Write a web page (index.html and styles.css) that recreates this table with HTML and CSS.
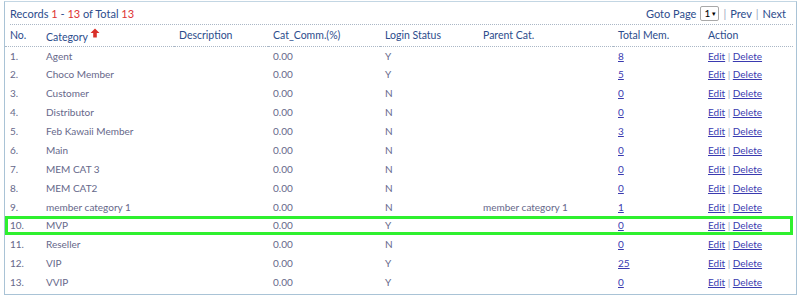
FILE: index.html
```html
<!DOCTYPE html>
<html>
<head>
<meta charset="utf-8">
<link rel="stylesheet" href="styles.css">
</head>
<body>
<div class="panel">
  <div class="topbar">
    <div class="records">Records <span class="num">1</span> - <span class="num">13</span> of Total <span class="num">13</span></div>
    <div class="pager">Goto Page <span class="sel">1 <span class="caret">&#9662;</span></span> <span class="sep">|</span> Prev <span class="sep">|</span> Next</div>
  </div>
  <table class="grid">
    <thead>
      <tr>
        <th class="c-no">No.</th>
        <th class="c-cat">Category<svg class="arrow" width="10" height="10" viewBox="0 0 10 10"><path d="M5 0.5 L9.5 5 L6.8 5 L6.8 9.5 L3.2 9.5 L3.2 5 L0.5 5 Z" fill="#d9302a"/></svg></th>
        <th class="c-desc">Description</th>
        <th class="c-comm">Cat_Comm.(%)</th>
        <th class="c-login">Login Status</th>
        <th class="c-parent">Parent Cat.</th>
        <th class="c-total">Total Mem.</th>
        <th class="c-act">Action</th>
      </tr>
    </thead>
    <tbody>
      <tr><td>1.</td><td>Agent</td><td></td><td>0.00</td><td>Y</td><td></td><td><a>8</a></td><td><a>Edit</a> <span class="sep">|</span> <a>Delete</a></td></tr>
      <tr><td>2.</td><td>Choco Member</td><td></td><td>0.00</td><td>Y</td><td></td><td><a>5</a></td><td><a>Edit</a> <span class="sep">|</span> <a>Delete</a></td></tr>
      <tr><td>3.</td><td>Customer</td><td></td><td>0.00</td><td>N</td><td></td><td><a>0</a></td><td><a>Edit</a> <span class="sep">|</span> <a>Delete</a></td></tr>
      <tr><td>4.</td><td>Distributor</td><td></td><td>0.00</td><td>N</td><td></td><td><a>0</a></td><td><a>Edit</a> <span class="sep">|</span> <a>Delete</a></td></tr>
      <tr><td>5.</td><td>Feb Kawaii Member</td><td></td><td>0.00</td><td>N</td><td></td><td><a>3</a></td><td><a>Edit</a> <span class="sep">|</span> <a>Delete</a></td></tr>
      <tr><td>6.</td><td>Main</td><td></td><td>0.00</td><td>N</td><td></td><td><a>0</a></td><td><a>Edit</a> <span class="sep">|</span> <a>Delete</a></td></tr>
      <tr><td>7.</td><td>MEM CAT 3</td><td></td><td>0.00</td><td>N</td><td></td><td><a>0</a></td><td><a>Edit</a> <span class="sep">|</span> <a>Delete</a></td></tr>
      <tr><td>8.</td><td>MEM CAT2</td><td></td><td>0.00</td><td>N</td><td></td><td><a>0</a></td><td><a>Edit</a> <span class="sep">|</span> <a>Delete</a></td></tr>
      <tr><td>9.</td><td>member category 1</td><td></td><td>0.00</td><td>N</td><td>member category 1</td><td><a>1</a></td><td><a>Edit</a> <span class="sep">|</span> <a>Delete</a></td></tr>
      <tr class="hl"><td>10.</td><td>MVP</td><td></td><td>0.00</td><td>Y</td><td></td><td><a>0</a></td><td><a>Edit</a> <span class="sep">|</span> <a>Delete</a></td></tr>
      <tr><td>11.</td><td>Reseller</td><td></td><td>0.00</td><td>N</td><td></td><td><a>0</a></td><td><a>Edit</a> <span class="sep">|</span> <a>Delete</a></td></tr>
      <tr><td>12.</td><td>VIP</td><td></td><td>0.00</td><td>Y</td><td></td><td><a>25</a></td><td><a>Edit</a> <span class="sep">|</span> <a>Delete</a></td></tr>
      <tr><td>13.</td><td>VVIP</td><td></td><td>0.00</td><td>Y</td><td></td><td><a>0</a></td><td><a>Edit</a> <span class="sep">|</span> <a>Delete</a></td></tr>
    </tbody>
  </table>
</div>
</body>
</html>
```
FILE: styles.css
```css
html, body {
  margin: 0;
  padding: 0;
  background: #ffffff;
}
body {
  padding: 0 3px 0 4px;
  font-family: "Lato", "Open Sans", sans-serif;
  font-size: 10px;
  color: #66688a;
}
.panel {
  border: 1px solid #a9c3d6;
  border-top-color: #c3d6e3;
  padding: 0 3px 0 0;
  height: 294px;
  box-sizing: border-box;
  margin-top: 1px;
}
.topbar {
  display: flex;
  justify-content: space-between;
  align-items: center;
  height: 22px;
  margin-left: 5px;
  padding-right: 7px;
  border-bottom: 1px dotted #aab7c6;
  color: #2c4c8c;
  font-size: 11px;
}
.records .num { color: #dd3333; }
.pager { display: flex; align-items: center; gap: 4px; }
.pager .sep { color: #9aa8c0; }
.sel {
  display: inline-flex;
  align-items: center;
  justify-content: space-between;
  box-sizing: border-box;
  width: 19px;
  height: 15px;
  padding: 0 2px 0 3px;
  border: 1px solid #a8a8a8;
  border-radius: 2px;
  color: #000;
  font-size: 10px;
  background: #fff;
}
.caret { font-size: 7px; }
.grid {
  width: 100%;
  border-collapse: collapse;
  table-layout: fixed;
}
.grid th, .grid td {
  box-sizing: border-box;
}
.grid th {
  text-align: left;
  font-weight: normal;
  color: #2c4c8c;
  font-size: 10.5px;
  height: 21px;
  padding: 0 0 0 5px;
  border-bottom: 1px dotted #aab7c6;
  white-space: nowrap;
}
.grid td {
  height: 18.9px;
  padding: 0 0 0 5px;
  white-space: nowrap;
  line-height: 12px;
}
.c-no { width: 36px; }
.c-cat { width: 133px; }
.c-desc { width: 94px; }
.c-comm { width: 112px; }
.c-login { width: 98px; }
.c-parent { width: 135px; }
.c-total { width: 90px; }
.c-act { width: auto; }
.arrow { vertical-align: 3px; margin-left: 2px; }
.grid a {
  color: #3a3ab0;
  text-decoration: underline;
}
.grid td .sep { color: #9aa8c0; }
.grid tr.hl {
  outline: 3px solid #2ef02e;
  outline-offset: -3px;
}
```
